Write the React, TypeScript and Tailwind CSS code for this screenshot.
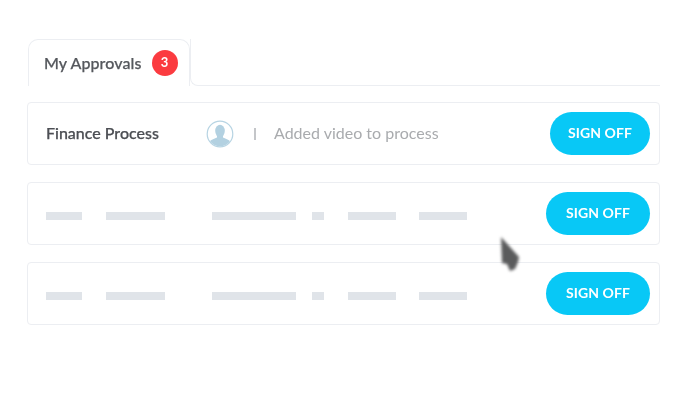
import React from "react";

const font = { fontFamily: '"Lato", "Open Sans", sans-serif' };

function SignOff({ wide }: { wide?: boolean }) {
  return (
    <button className={`ml-auto h-[43px] rounded-full bg-[#08c8f6] pb-[2px] text-[14px] font-bold tracking-[0.1px] text-white ${wide ? "w-[104px]" : "w-[100px]"}`}>
      SIGN OFF
    </button>
  );
}

function Bar({ w, ml }: { w: string; ml: string }) {
  return <div className={`h-2 bg-[#e0e4e9] ${w} ${ml}`} />;
}

function PlaceholderRow() {
  return (
    <div className="flex h-[63px] items-center rounded-[4px] border border-[#eceef2] pl-[18px] pr-[9px]">
      <div className="mt-[5px] flex">
        <Bar w="w-[36px]" ml="ml-0" />
        <Bar w="w-[59px]" ml="ml-[24px]" />
        <Bar w="w-[84px]" ml="ml-[47px]" />
        <Bar w="w-[12px]" ml="ml-[16px]" />
        <Bar w="w-[48px]" ml="ml-[24px]" />
        <Bar w="w-[48px]" ml="ml-[23px]" />
      </div>
      <SignOff wide />
    </div>
  );
}

export default function App() {
  return (
    <div className="relative h-[416px] w-[679px] overflow-hidden bg-white pl-[27px] pr-[19px] pt-[39px] blur-[0.4px]" style={font}>
      <div className="flex h-[47px] items-stretch">
        <div className="ml-px flex w-[162px] items-center rounded-t-[10px] border border-b-0 border-[#eceef2] pl-[15px]">
          <span className="text-[16px] font-medium tracking-[0.1px] text-[#55585d] [-webkit-text-stroke:0.25px_#55585d]">My Approvals</span>
          <span className="ml-[10px] flex h-[26px] w-[26px] items-center justify-center rounded-full bg-[#fb3b40] text-[13px] font-bold text-white">3</span>
        </div>
        <div className="flex-1 rounded-bl-[8px] border-b border-l border-[#eceef2]" />
      </div>
      <div className="mt-[16px] flex flex-col gap-[17px]">
        <div className="flex h-[63px] items-center rounded-[4px] border border-[#eceef2] pl-[18px] pr-[9px]">
          <span className="mb-[2px] w-[160px] text-[16px] font-medium text-[#4c4f54] [-webkit-text-stroke:0.25px_#4c4f54]">Finance Process</span>
          <svg width="28" height="28" viewBox="0 0 28 28" className="shrink-0">
            <defs>
              <clipPath id="c"><circle cx="14" cy="14" r="12.2" /></clipPath>
            </defs>
            <circle cx="14" cy="14" r="12.8" fill="#fff" stroke="#b7d4e3" strokeWidth="1.2" />
            <g clipPath="url(#c)" fill="#b3d1e1">
              <ellipse cx="14" cy="11" rx="4.8" ry="6.2" />
              <path d="M11 15h6v2.5c3 1.6 6.5 2 7.5 4.5v6h-21v-6c1-2.500 4.500-2.900 7.500-4.500z" />
            </g>
          </svg>
          <span className="ml-[20px] h-[12px] w-[2px] bg-[#c4c6c9]" />
          <span className="mb-[2px] ml-[18px] text-[16px] text-[#a9abae]">Added video to process</span>
          <SignOff />
        </div>
        <PlaceholderRow />
        <PlaceholderRow />
      </div>
      <svg width="30" height="46" viewBox="0 0 30 46" className="absolute left-[495px] top-[231px] blur-[1.6px]">
        <path d="M6 6 L24 26 L23 31 L20 38 L15 40 L12 33 L7 32 Z" fill="#5a5b5c" />
      </svg>
    </div>
  );
}
